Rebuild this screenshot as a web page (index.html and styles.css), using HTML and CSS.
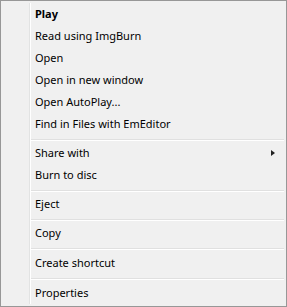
FILE: index.html
```html
<!DOCTYPE html>
<html>
<head>
<meta charset="utf-8">
<link rel="stylesheet" href="styles.css">
</head>
<body>
<div class="menu">
  <ul class="list">
    <li class="item bold">Play</li>
    <li class="item">Read using ImgBurn</li>
    <li class="item">Open</li>
    <li class="item">Open in new window</li>
    <li class="item">Open AutoPlay...</li>
    <li class="item">Find in Files with EmEditor</li>
    <li class="sep"></li>
    <li class="item sub">Share with<span class="arrow"></span></li>
    <li class="item">Burn to disc</li>
    <li class="sep"></li>
    <li class="item">Eject</li>
    <li class="sep"></li>
    <li class="item">Copy</li>
    <li class="sep"></li>
    <li class="item">Create shortcut</li>
    <li class="sep"></li>
    <li class="item">Properties</li>
  </ul>
</div>
</body>
</html>
```
FILE: styles.css
```css
html, body {
  margin: 0;
  padding: 0;
}
body {
  width: 287px;
  height: 307px;
  font-family: "Noto Sans", "Open Sans", sans-serif;
  font-size: 11px;
  color: #000;
}
.menu {
  box-sizing: border-box;
  width: 287px;
  height: 307px;
  border: 1px solid #979797;
  background: #f0f0f0;
  padding: 2px;
}
.list {
  list-style: none;
  margin: 0;
  padding: 0;
  height: 301px;
  background: linear-gradient(to right,
    transparent 26px, #e2e3e3 26px, #e2e3e3 27px,
    #ffffff 27px, #ffffff 28px, transparent 28px);
}
.item {
  height: 22px;
  line-height: 22px;
  padding-left: 32px;
  display: flex;
  align-items: center;
  white-space: nowrap;
}
.bold {
  font-weight: bold;
}
.sub {
  justify-content: space-between;
  padding-right: 9px;
}
.arrow {
  width: 0;
  height: 0;
  border-top: 3.5px solid transparent;
  border-bottom: 3.5px solid transparent;
  border-left: 4px solid #222;
}
.sep {
  height: 7px;
  box-sizing: border-box;
  padding-top: 4px;
  margin-left: 28px;
}
.sep:nth-last-child(-n+4) {
  height: 8px;
}
.sep::before {
  content: "";
  display: block;
  height: 1px;
  background: #e0e0e0;
  border-bottom: 1px solid #ffffff;
}
```
